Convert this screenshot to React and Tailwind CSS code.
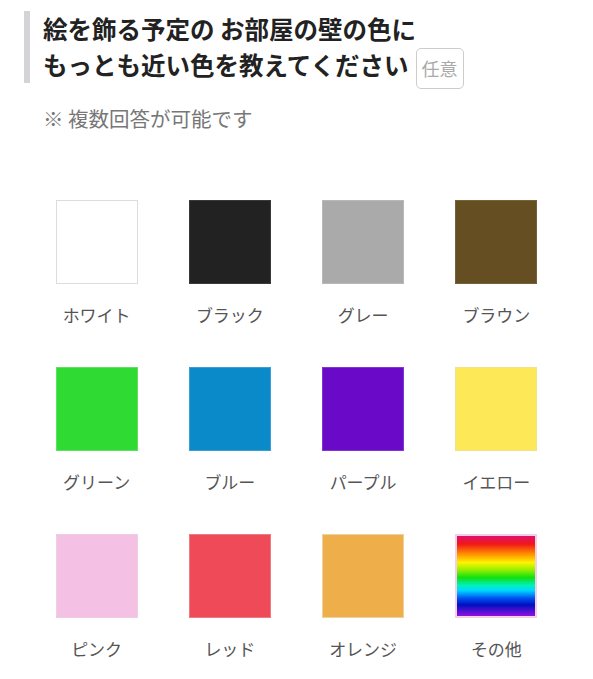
import React from 'react';

const colors = [
  { name: 'ホワイト', cls: 'bg-white border border-[#dcdcdc]' },
  { name: 'ブラック', cls: 'bg-[#222222] border border-[#3a3a3a]' },
  { name: 'グレー', cls: 'bg-[#aaaaaa] border border-[#b8b8b8]' },
  { name: 'ブラウン', cls: 'bg-[#654f22] border border-[#766238]' },
  { name: 'グリーン', cls: 'bg-[#2fda33] border border-[#5ee062]' },
  { name: 'ブルー', cls: 'bg-[#0a8ac9] border border-[#3aa0d4]' },
  { name: 'パープル', cls: 'bg-[#6a0ac8] border border-[#8236d0]' },
  { name: 'イエロー', cls: 'bg-[#fde858] border border-[#f0e090]' },
  { name: 'ピンク', cls: 'bg-[#f4c0e4] border border-[#ecd0e2]' },
  { name: 'レッド', cls: 'bg-[#ee4a58] border border-[#f07a84]' },
  { name: 'オレンジ', cls: 'bg-[#eeae4a] border border-[#f2cfa0]' },
  {
    name: 'その他',
    cls: 'border-2 border-[#f4cfe8] bg-[linear-gradient(to_bottom,#e0106e_0%,#f01818_10%,#ff8a00_22%,#fff200_33%,#9af000_42%,#10e010_52%,#00f0c0_62%,#00d8ff_68%,#0050f0_78%,#0010c0_86%,#9010e0_100%)]',
  },
];

const App = () => {
  return (
    <div className="min-h-[679px] bg-white font-['Noto_Sans_CJK_JP','Noto_Sans',sans-serif] pt-[11px]">
      <div className="ml-[24px] border-l-[6px] border-[#d3d3d8] pl-[13px]">
        <h1 className="text-[24.5px] leading-[36px] font-bold text-[#222222]">
          絵を飾る予定の お部屋の壁の色に
          <br />
          もっとも近い色を教えてください
          <span className="ml-[7px] mt-[1px] mb-[-6px] inline-block align-top rounded-[5px] border border-[#cccccc] px-[5px] text-[18px] leading-[39px] font-normal text-[#aaaaaa]">
            任意
          </span>
        </h1>
      </div>
      <p className="mt-[21px] ml-[43px] text-[20.5px] leading-[28px] text-[#777777]">※ 複数回答が可能です</p>

      <div className="mt-[68px] ml-[30px] w-[533px] grid grid-cols-4 gap-y-[40px]">
        {colors.map((c) => (
          <div key={c.name} className="flex flex-col items-center">
            <div className={`w-[82px] h-[84px] ${c.cls}`} />
            <span className="mt-[19px] text-[17px] leading-[24px] text-[#555555]">{c.name}</span>
          </div>
        ))}
      </div>
    </div>
  );
};

export default App;
